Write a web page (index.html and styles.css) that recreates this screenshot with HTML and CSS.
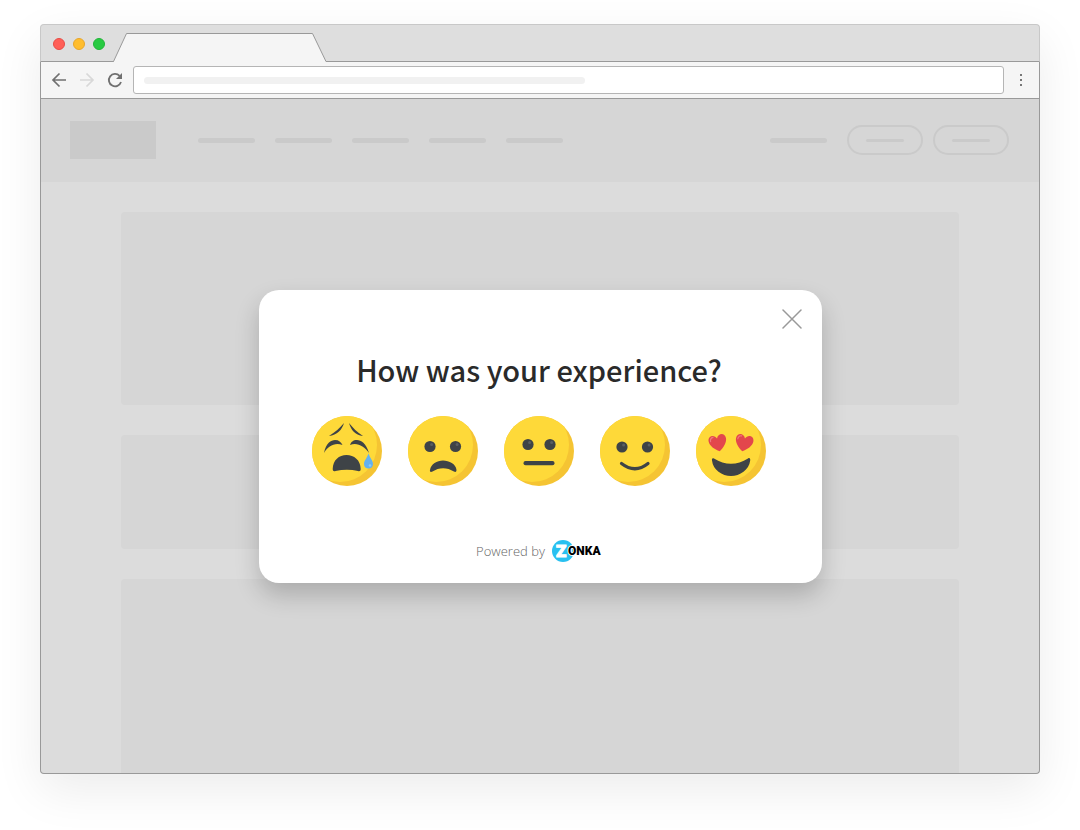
FILE: index.html
```html
<!DOCTYPE html>
<html lang="en">
<head>
    <meta charset="utf-8">
    <title>Experience survey</title>
    <link rel="stylesheet" href="styles.css">
</head>
<body>
<!-- shared face shape -->
<svg class="defs" width="0" height="0" aria-hidden="true">
    <defs>
        <clipPath id="faceClip"><circle cx="35" cy="35" r="35"/></clipPath>
        <g id="face">
            <circle cx="35" cy="35" r="35" fill="#f5c433"/>
            <circle cx="28" cy="29" r="37" fill="#fed939" clip-path="url(#faceClip)"/>
        </g>
        <g id="eye">
            <circle r="5.6" fill="#3e4347"/>
            <circle cx="1.6" cy="-2" r="1.5" fill="#5a5f63"/>
        </g>
        <g id="heart">
            <path d="M0 9C-5 6-9.500 1-9.500-3.500C-9.500-10-2-10.500 0-5C2-10.500 9.500-10 9.500-3.500C9.500 1 5 6 0 9Z" fill="#e3474c"/>
            <path d="M-7.500-3C-7.500-5.500-6-7-4-7" fill="none" stroke="#f0797d" stroke-width="1.200" stroke-linecap="round"/>
        </g>
    </defs>
</svg>

<div class="browser">
    <div class="titlebar">
        <div class="lights">
            <span class="light red"></span>
            <span class="light yellow"></span>
            <span class="light green"></span>
        </div>
        <svg class="tab" width="214" height="29" viewBox="0 0 214 29" aria-hidden="true">
            <path d="M0.500 28.500L13.500 .5H199.500L213 28.500V29H.5Z" fill="#f5f5f5"/>
            <path d="M0 28.500H.5L13.500 .5H199.500L213 28.500H214" fill="none" stroke="#999"/>
        </svg>
    </div>

    <div class="toolbar">
        <button class="tool" type="button" aria-label="Back">
            <svg width="16" height="16" viewBox="0 0 16 16"><path d="M15 8H2M8.500 1.500L2 8L8.500 14.500" fill="none" stroke="#707070" stroke-width="1.700"/></svg>
        </button>
        <button class="tool" type="button" aria-label="Forward">
            <svg width="16" height="16" viewBox="0 0 16 16"><path d="M1 8H14M7.500 1.500L14 8L7.500 14.500" fill="none" stroke="#d8d8d8" stroke-width="1.700"/></svg>
        </button>
        <button class="tool" type="button" aria-label="Reload">
            <svg width="16" height="16" viewBox="0 0 16 16"><path d="M14 10A6.200 6.200 0 1 1 12.600 3.800" fill="none" stroke="#707070" stroke-width="1.800"/><path d="M15 1V7H9Z" fill="#707070"/></svg>
        </button>
        <div class="address"><span class="bar url"></span></div>
        <button class="tool menu" type="button" aria-label="Menu">
            <svg width="2" height="12" viewBox="0 0 2 12"><path d="M0 0h2v2H0zM0 5h2v2H0zM0 10h2v2H0z" fill="#777"/></svg>
        </button>
    </div>

    <div class="page">
        <div class="nav">
            <div class="logo"></div>
            <div class="links">
                <span class="bar"></span>
                <span class="bar"></span>
                <span class="bar"></span>
                <span class="bar"></span>
                <span class="bar"></span>
            </div>
            <div class="actions">
                <span class="bar"></span>
                <div class="pills">
                    <div class="pill"><span class="bar small"></span></div>
                    <div class="pill"><span class="bar small"></span></div>
                </div>
            </div>
        </div>
        <div class="content">
            <div class="block"></div>
            <div class="block short"></div>
            <div class="block last"></div>
        </div>

        <div class="overlay">
            <div class="popup" role="dialog" aria-labelledby="question">
                <button class="close" type="button" aria-label="Close">
                    <svg width="20" height="20" viewBox="0 0 20 20"><path d="M1 1L19 19M19 1L1 19" stroke="#999" stroke-width="1.500" stroke-linecap="round"/></svg>
                </button>
                <h1 id="question">How was your experience?</h1>
                <div class="faces">
                    <button class="face" type="button" aria-label="Terrible">
                        <svg width="70" height="70" viewBox="0 0 70 70">
                            <use href="#face"/>
                            <g fill="#3e4347">
                                <path d="M17 20C25 19 30 14 32 7C28 12 23 16 17 20Z"/>
                                <path d="M51 20C43 19 39 14 37 7C41 12 45 16 51 20Z"/>
                                <path d="M12 37C14 27 19 24 23 24C27 24 29 26 30.500 29C23 26 16 30 12 37Z"/>
                                <path d="M57 37C54 27 49 24 45 24C41 24 39 26 38 29C45 26 52 30 57 37Z"/>
                                <path d="M20.700 53C21 44 27 39 34.500 39C42 39 48.500 44 48.700 53C48.700 55 47.500 55.600 46 55C39 53.300 31 53.300 23.500 55C22 55.500 20.700 55 20.700 53Z"/>
                            </g>
                            <path d="M56.500 37.500C55 42 52 44.500 52 48C52 51 54 52.500 56.500 52.500C59 52.500 61 51 61 48C61 44.500 58 42 56.500 37.500Z" fill="#65b1ef"/>
                            <circle cx="58" cy="49.500" r="1.300" fill="#8dcaf7"/>
                        </svg>
                    </button>
                    <button class="face" type="button" aria-label="Bad">
                        <svg width="70" height="70" viewBox="0 0 70 70">
                            <use href="#face"/>
                            <use href="#eye" x="22" y="30.500"/>
                            <use href="#eye" x="47.500" y="30.500"/>
                            <path d="M22 54C23 48 29 44.500 35 44.500C41 44.500 48 48 48.500 54C48.500 56 47.300 56.300 46 55.500C39 51 31 51 24.500 55.500C23 56.500 21.500 56 22 54Z" fill="#3e4347"/>
                        </svg>
                    </button>
                    <button class="face" type="button" aria-label="Okay">
                        <svg width="70" height="70" viewBox="0 0 70 70">
                            <use href="#face"/>
                            <use href="#eye" x="24" y="28.500"/>
                            <use href="#eye" x="46" y="28.500"/>
                            <rect x="19.500" y="45" width="31" height="4.200" rx="2" fill="#3e4347"/>
                        </svg>
                    </button>
                    <button class="face" type="button" aria-label="Good">
                        <svg width="70" height="70" viewBox="0 0 70 70">
                            <use href="#face"/>
                            <use href="#eye" x="22" y="31"/>
                            <use href="#eye" x="47.500" y="31"/>
                            <path d="M21.500 47.500Q35 58 48 47.500" fill="none" stroke="#3e4347" stroke-width="3.200" stroke-linecap="round"/>
                        </svg>
                    </button>
                    <button class="face" type="button" aria-label="Excellent">
                        <svg width="70" height="70" viewBox="0 0 70 70">
                            <use href="#face"/>
                            <use href="#heart" transform="translate(22 27) rotate(-12) scale(.93)"/>
                            <use href="#heart" transform="translate(48 27) rotate(12) scale(.93)"/>
                            <path d="M18 42.500C29 49.500 41 49.500 52 42.500C53.500 41.500 54.500 42.500 54.200 44.500C53 54 44 60 35 60C26 60 17 54 16 44.500C15.700 42.500 16.500 41.700 18 42.500Z" fill="#3e4347"/>
                        </svg>
                    </button>
                </div>
                <div class="powered">
                    <span>Powered by</span>
                    <svg class="brand" width="50" height="24" viewBox="0 0 50 24" role="img" aria-label="Zonka">
                        <circle cx="11" cy="12" r="11" fill="#29c0f0"/>
                        <text class="brand-z" x="4" y="18">Z</text>
                        <text class="brand-name" x="16" y="16">ONKA</text>
                    </svg>
                </div>
            </div>
        </div>
    </div>
</div>
</body>
</html>
```
FILE: styles.css
```css
* {
    box-sizing: border-box;
}

body {
    margin: 0;
    padding: 24px 40px 56px;
    background-color: #fff;
    font-family: "Noto Sans CJK SC", sans-serif;
}

button {
    padding: 0;
    border: none;
    background: none;
    cursor: pointer;
}

svg {
    display: block;
}

.defs {
    position: absolute;
}

/* browser window */
.browser {
    border-radius: 4px;
    box-shadow: 0 16px 48px rgba(0, 0, 0, 0.08);
}

.titlebar {
    display: flex;
    align-items: flex-end;
    height: 38px;
    padding-left: 12px;
    background-color: #dedede;
    border: 1px solid #c8c8c8;
    border-bottom-color: #999;
    border-radius: 4px 4px 0 0;
}

.lights {
    display: flex;
    gap: 8px;
    margin-bottom: 11px;
}

.light {
    width: 12px;
    height: 12px;
    border: 1px solid;
    border-radius: 50%;
}

.red {
    background-color: #ff5f57;
    border-color: #e84c45;
}

.yellow {
    background-color: #ffbd2e;
    border-color: #e8a62a;
}

.green {
    background-color: #28ca42;
    border-color: #21b538;
}

.tab {
    margin-left: 8px;
    margin-bottom: -1px;
}

.toolbar {
    display: flex;
    align-items: center;
    gap: 12px;
    height: 37px;
    padding: 0 10px;
    background-color: #f5f5f5;
    border: 1px solid #999;
    border-top: none;
}

.tool {
    display: flex;
    justify-content: center;
    width: 16px;
}

.address {
    display: flex;
    align-items: center;
    flex: 1;
    height: 28px;
    margin-left: -2px;
    padding: 0 10px;
    background-color: #fff;
    border: 1px solid #b5b5b5;
    border-radius: 3px;
}

.menu {
    margin-left: -3px;
}

/* placeholder page */
.page {
    position: relative;
    border: 1px solid #999;
    border-top: none;
    border-radius: 0 0 4px 4px;
    background-color: #dcdcdc;
    overflow: hidden;
}

.nav {
    display: flex;
    align-items: center;
    height: 83px;
    padding: 0 30px 1px 29px;
    background-color: #d6d6d6;
}

.logo {
    width: 86px;
    height: 38px;
    background-color: #cacaca;
}

.bar {
    width: 57px;
    height: 5px;
    border-radius: 3px;
    background-color: #cacaca;
}

.bar.url {
    width: 52%;
    height: 7px;
    border-radius: 4px;
    background-color: #f1f1f1;
}

.bar.small {
    width: 38px;
    height: 3px;
}

.links {
    display: flex;
    gap: 20px;
    margin-left: 42px;
}

.actions {
    display: flex;
    align-items: center;
    gap: 20px;
    margin-left: auto;
}

.pills {
    display: flex;
    gap: 10px;
}

.pill {
    display: flex;
    align-items: center;
    justify-content: center;
    width: 76px;
    height: 30px;
    border: 2px solid #cacaca;
    border-radius: 15px;
}

.content {
    display: flex;
    flex-direction: column;
    gap: 30px;
    padding: 30px 80px 0;
}

.block {
    height: 193px;
    border-radius: 4px;
    background-color: #d6d6d6;
}

.block.short {
    height: 114px;
}

.block.last {
    height: 194px;
    border-radius: 4px 4px 0 0;
}

/* survey popup */
.overlay {
    position: absolute;
    inset: 0;
    display: flex;
    align-items: center;
    justify-content: center;
}

.popup {
    position: relative;
    display: flex;
    flex-direction: column;
    align-items: center;
    width: 563px;
    padding: 55px 22px 20px 20px;
    border-radius: 20px;
    background-color: #fff;
    box-shadow: 0 12px 24px rgba(0, 0, 0, 0.2);
}

.close {
    position: absolute;
    top: 19px;
    right: 20px;
}

h1 {
    margin: 0;
    font-size: 29px;
    line-height: 48px;
    font-weight: 500;
    color: #2a2a2a;
}

.faces {
    display: flex;
    gap: 26px;
    margin-top: 23px;
}

.face {
    border-radius: 50%;
}

.powered {
    display: flex;
    align-items: center;
    gap: 7px;
    margin-top: 53px;
    font-family: "Open Sans", sans-serif;
    font-size: 13px;
    line-height: 24px;
    font-weight: 300;
    color: #666;
}

.brand {
    overflow: visible;
}

.brand-z {
    font-family: Roboto, sans-serif;
    font-size: 17px;
    font-weight: 900;
    fill: #fff;
    stroke: #fff;
}

.brand-name {
    font-family: Roboto, sans-serif;
    font-size: 12px;
    font-weight: 900;
    fill: #000;
    stroke: #fff;
    stroke-width: 2px;
    paint-order: stroke;
}
```
